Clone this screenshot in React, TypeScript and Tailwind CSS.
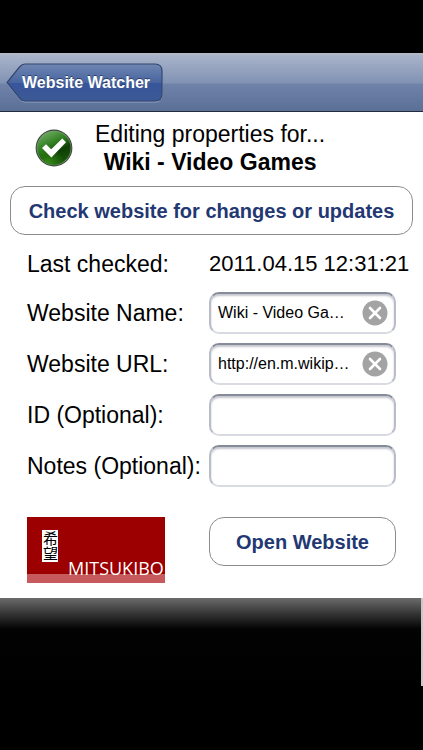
import React, { useState } from 'react';

interface FieldRowProps {
  id: string;
  label: string;
  initial?: string;
}

const CheckBadge: React.FC = () => (
  <svg className="h-[38px] w-[38px] shrink-0" viewBox="0 0 38 38" aria-hidden="true">
    <defs>
      <linearGradient id="badgeFill" x1="0.25" y1="0" x2="0.75" y2="1">
        <stop offset="0" stopColor="#6fae62" />
        <stop offset="0.4" stopColor="#2b7a1c" />
        <stop offset="0.62" stopColor="#0d3d04" />
        <stop offset="1" stopColor="#1a5a0a" />
      </linearGradient>
      <radialGradient id="badgeGlow" cx="0.3" cy="0.95" r="0.5">
        <stop offset="0" stopColor="#3fa01c" stopOpacity="0.8" />
        <stop offset="1" stopColor="#3fa01c" stopOpacity="0" />
      </radialGradient>
    </defs>
    <circle cx="19" cy="19" r="18.4" fill="#3d4a3d" />
    <circle cx="19" cy="19" r="17.3" fill="#7f9a7b" />
    <circle cx="19" cy="19" r="16.7" fill="url(#badgeFill)" />
    <circle cx="19" cy="19" r="16.7" fill="url(#badgeGlow)" />
    <path d="M7 18.900 L11 15.200 L16.200 20.300 L27.300 9.500 L31 13.300 L16.400 28.500Z" fill="#fff" />
  </svg>
);

const BackButton: React.FC<{ title: string }> = ({ title }) => (
  <button type="button" className="relative h-10 w-[157px] pl-4 text-left">
    <svg className="absolute inset-0 h-full w-full" viewBox="0 0 157 40" preserveAspectRatio="none" aria-hidden="true">
      <defs>
        <linearGradient id="backFill" x1="0" y1="0" x2="0" y2="1">
          <stop offset="0" stopColor="#6f86b2" />
          <stop offset="0.5" stopColor="#48659f" />
          <stop offset="0.51" stopColor="#37559a" />
          <stop offset="1" stopColor="#3c5996" />
        </linearGradient>
      </defs>
      <path d="M19 2 H149 Q156 2 156 9 V32 Q156 39 149 39 H19 Q16 39 13.500 36 L1 20.500 L13.500 5 Q16 2 19 2Z" fill="none" stroke="#93a4c6" />
      <path d="M19 1 H149 Q156 1 156 8 V31 Q156 38 149 38 H19 Q16 38 13.500 35 L1 19.500 L13.500 4 Q16 1 19 1Z" fill="url(#backFill)" stroke="#34476f" strokeWidth="1.200" />
    </svg>
    <span className="relative text-[16px] leading-5 font-bold whitespace-nowrap text-white [text-shadow:0_-1px_0_#2b3f69]">
      {title}
    </span>
  </button>
);

const FieldRow: React.FC<FieldRowProps> = ({ id, label, initial = '' }) => {
  const [value, setValue] = useState(initial);

  return (
    <div className="grid grid-cols-[182px_1fr] items-center">
      <label htmlFor={id} className="text-[23px] leading-7 whitespace-nowrap">
        {label}
      </label>
      {/* sunken frame, darker along the top edge */}
      <div className="flex h-[42px] items-center rounded-[10px] border-2 border-t-[#868b99] border-r-[#b9bcc9] border-b-[#d9dbe3] border-l-[#b9bcc9] bg-white pr-1.5 pl-[7px] shadow-[inset_0_2px_2px_#c4c6ce]">
        <input
          id={id}
          type="text"
          value={value}
          onChange={(e) => setValue(e.target.value)}
          className="w-full min-w-0 bg-transparent text-[16px] leading-5 outline-none"
        />
        {value && (
          <button type="button" aria-label={`Clear ${label}`} onClick={() => setValue('')} className="shrink-0">
            <svg className="h-[26px] w-[26px]" viewBox="0 0 26 26" aria-hidden="true">
              <circle cx="13" cy="13" r="12.500" fill="#a3a3a3" />
              <path d="M8 8 L18 18 M18 8 L8 18" stroke="#fff" strokeWidth="2.600" strokeLinecap="round" />
            </svg>
          </button>
        )}
      </div>
    </div>
  );
};

const Logo: React.FC = () => (
  <div className="relative h-[66px] w-[138px] overflow-hidden bg-[#9c0000] text-white">
    <div className="absolute inset-x-0 bottom-0 h-[9px] bg-[#c65a5c]" />
    <div
      lang="ja"
      className="absolute top-[13px] left-[15px] flex h-8 w-4 items-center justify-center bg-white font-['Noto_Sans_CJK_JP',sans-serif] text-[15px] leading-4 text-black [writing-mode:vertical-rl]"
    >
      希望
    </div>
    <span className="absolute bottom-[3px] left-[41px] font-['Open_Sans',sans-serif] text-[18px] leading-6">MITSUKIBO</span>
  </div>
);

export default function App() {
  return (
    <div className="min-h-screen bg-black pt-[53px] font-['Liberation_Sans',Arial,sans-serif] text-black">
      <header className="flex h-[59px] items-center border-t-2 border-b border-t-[#b3b8c5] border-b-[#242b3b] bg-[linear-gradient(#a9b4ca_0%,#8192b3_50%,#6e82aa_52%,#5b7097_100%)] pl-1.5">
        <BackButton title="Website Watcher" />
      </header>

      <main className="bg-white pt-2 pb-[15px]">
        <div className="flex items-center gap-[22px] pl-[35px]">
          <CheckBadge />
          <h1 className="text-center text-[23px] leading-7">
            Editing properties for...
            <br />
            <strong>Wiki - Video Games</strong>
          </h1>
        </div>

        <div className="px-2.5 pt-2.5">
          <button type="button" className="h-[49px] w-full rounded-[15px] border border-[#8c8c8c] text-[20px] font-bold whitespace-nowrap text-[#233872]">
            Check website for changes or updates
          </button>
        </div>

        <div className="px-[27px]">
          <div className="grid grid-cols-[182px_1fr] pt-[15px] leading-7">
            <span className="text-[23px]">Last checked:</span>
            <time className="text-[22px] whitespace-nowrap">2011.04.15 12:31:21</time>
          </div>

          <div className="grid gap-[9px] pt-3.5">
            <FieldRow id="name" label="Website Name:" initial="Wiki - Video Ga…" />
            <FieldRow id="url" label="Website URL:" initial="http://en.m.wikip…" />
            <FieldRow id="item-id" label="ID (Optional):" />
            <FieldRow id="notes" label="Notes (Optional):" />
          </div>

          <div className="grid grid-cols-[182px_1fr] items-start pt-[30px]">
            <Logo />
            <button type="button" className="h-[49px] rounded-[15px] border border-[#8c8c8c] text-[20px] font-bold text-[#233872]">
              Open Website
            </button>
          </div>
        </div>
      </main>

      <div className="h-[88px] border-r-2 border-r-[#c8c8c8] bg-[linear-gradient(#6b6b6b_0,#3a3a3a_14px,#030303_31px,#000_100%)]" />
    </div>
  );
}
